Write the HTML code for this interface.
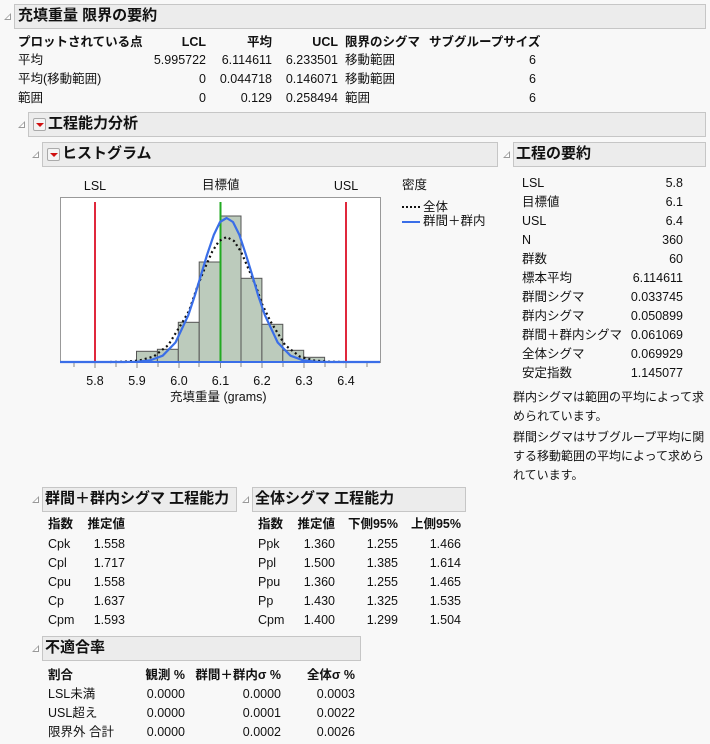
<!DOCTYPE html>
<html><head><meta charset="utf-8"><style>
body{margin:0;width:710px;height:744px;background:#f8f8f8;font-family:"Liberation Sans","Noto Sans CJK JP",sans-serif;font-size:12.5px;color:#111;position:relative;overflow:hidden}
.a{position:absolute;white-space:nowrap;line-height:14px}
.n{font-size:12px}
.r{text-align:right}
.b{font-weight:bold}
.hb{position:absolute;background:#ececec;border:1px solid #c6c6c6;box-sizing:border-box}
.ht{position:absolute;font-weight:bold;font-size:15px;line-height:18px;white-space:nowrap}
.tri{position:absolute;width:0;height:0;border-left:7px solid transparent;border-bottom:7px solid #999}
.tri:after{content:"";position:absolute;left:-5px;top:2px;border-left:4px solid transparent;border-bottom:4px solid #fff}
.btn{position:absolute;width:13px;height:13px;background:#f4f4f4;border:1px solid #aaa;border-radius:2px;box-sizing:border-box}
.btn:after{content:"";position:absolute;left:2px;top:4px;border-left:4px solid transparent;border-right:4px solid transparent;border-top:4px solid #d01010}
</style></head><body>

<div class="tri" style="left:4px;top:13px"></div>
<div class="hb" style="left:14px;top:4px;width:692px;height:25px"></div>
<div class="ht" style="left:18px;top:7px">充填重量 限界の要約</div>

<div class="a b" style="left:18px;top:35px">プロットされている点</div>
<div class="a b r" style="left:150px;top:35px;width:56px">LCL</div>
<div class="a b r" style="left:216px;top:35px;width:56px">平均</div>
<div class="a b r" style="left:282px;top:35px;width:56px">UCL</div>
<div class="a b" style="left:345px;top:35px">限界のシグマ</div>
<div class="a b" style="left:429px;top:35px">サブグループサイズ</div>

<div class="a" style="left:18px;top:53px">平均</div>
<div class="a r" style="left:130px;top:53px;width:76px">5.995722</div>
<div class="a r" style="left:196px;top:53px;width:76px">6.114611</div>
<div class="a r" style="left:262px;top:53px;width:76px">6.233501</div>
<div class="a" style="left:345px;top:53px">移動範囲</div>
<div class="a r" style="left:500px;top:53px;width:36px">6</div>

<div class="a" style="left:18px;top:72px">平均(移動範囲)</div>
<div class="a r" style="left:130px;top:72px;width:76px">0</div>
<div class="a r" style="left:196px;top:72px;width:76px">0.044718</div>
<div class="a r" style="left:262px;top:72px;width:76px">0.146071</div>
<div class="a" style="left:345px;top:72px">移動範囲</div>
<div class="a r" style="left:500px;top:72px;width:36px">6</div>

<div class="a" style="left:18px;top:91px">範囲</div>
<div class="a r" style="left:130px;top:91px;width:76px">0</div>
<div class="a r" style="left:196px;top:91px;width:76px">0.129</div>
<div class="a r" style="left:262px;top:91px;width:76px">0.258494</div>
<div class="a" style="left:345px;top:91px">範囲</div>
<div class="a r" style="left:500px;top:91px;width:36px">6</div>

<div class="tri" style="left:18px;top:121px"></div>
<div class="hb" style="left:28px;top:112px;width:678px;height:25px"></div>
<div class="btn" style="left:33px;top:118px"></div>
<div class="ht" style="left:48px;top:115px">工程能力分析</div>

<div class="tri" style="left:32px;top:151px"></div>
<div class="hb" style="left:42px;top:142px;width:456px;height:25px"></div>
<div class="btn" style="left:47px;top:148px"></div>
<div class="ht" style="left:62px;top:145px">ヒストグラム</div>

<div class="tri" style="left:503px;top:151px"></div>
<div class="hb" style="left:513px;top:142px;width:193px;height:25px"></div>
<div class="ht" style="left:516px;top:145px">工程の要約</div>

<svg style="position:absolute;left:0;top:0" width="710" height="744">
<rect x="60.5" y="197.5" width="320" height="165" fill="#fff" stroke="#999"/>
<g fill="#bccbbc" stroke="#555" stroke-width="1">
<rect x="136.5" y="351.3" width="20.9" height="10.7"/>
<rect x="157.4" y="349.3" width="20.9" height="12.7"/>
<rect x="178.3" y="322.3" width="20.9" height="39.7"/>
<rect x="199.2" y="262" width="20.9" height="100"/>
<rect x="220.1" y="216" width="20.9" height="146"/>
<rect x="241" y="278.3" width="20.9" height="83.7"/>
<rect x="261.9" y="324.3" width="20.9" height="37.7"/>
<rect x="282.8" y="350.3" width="20.9" height="11.7"/>
<rect x="303.7" y="357.3" width="20.9" height="4.7"/>
</g>
<line x1="95" y1="202" x2="95" y2="362" stroke="#e0283c" stroke-width="2"/>
<line x1="346" y1="202" x2="346" y2="362" stroke="#e0283c" stroke-width="2"/>
<line x1="220.5" y1="202" x2="220.5" y2="362" stroke="#22aa22" stroke-width="2"/>
<polyline fill="none" stroke="#111" stroke-width="2.2" stroke-dasharray="2,3" points="110,362 124.4,361.7 139,360.6 153.7,356.5 168.3,345.1 182.9,321.4 189,311 197.5,286.2 204,270 212.2,251.7 219,241 226.6,237 234,241 241,251.7 249,270 255.9,286.2 262,304 270.5,321.4 285.1,345.1 299.7,356.5 314.4,360.6 329,361.7 343.6,362"/>
<polyline fill="none" stroke="#3a6ee8" stroke-width="2.2" stroke-linejoin="round" points="60,362 124.4,362 137.2,361.7 150,360.4 162.7,355.7 175.5,342.5 188.3,315.2 195,295 201.1,274.7 207,255 213.8,234.9 220,222 226.6,218 233,222 239.4,234.9 246,255 252.1,274.7 258,295 264.9,315.2 277.7,342.5 290.5,355.7 303.2,360.4 316,361.7 328.8,362 380,362"/>
<line x1="60" y1="362" x2="380" y2="362" stroke="#3a6ee8" stroke-width="2"/>
<g stroke="#888">
<line x1="74" y1="363" x2="74" y2="367"/><line x1="95" y1="363" x2="95" y2="368"/><line x1="116" y1="363" x2="116" y2="367"/><line x1="137" y1="363" x2="137" y2="368"/><line x1="158" y1="363" x2="158" y2="367"/><line x1="179" y1="363" x2="179" y2="368"/><line x1="199" y1="363" x2="199" y2="367"/><line x1="220.5" y1="363" x2="220.5" y2="368"/><line x1="241" y1="363" x2="241" y2="367"/><line x1="262" y1="363" x2="262" y2="368"/><line x1="283" y1="363" x2="283" y2="367"/><line x1="304" y1="363" x2="304" y2="368"/><line x1="325" y1="363" x2="325" y2="367"/><line x1="346" y1="363" x2="346" y2="368"/><line x1="367" y1="363" x2="367" y2="367"/>
</g>
<g font-family="Liberation Sans,sans-serif" font-size="12.5" fill="#111" text-anchor="middle">
<text x="95" y="385">5.8</text><text x="137" y="385">5.9</text><text x="179" y="385">6.0</text><text x="220.5" y="385">6.1</text><text x="262" y="385">6.2</text><text x="304" y="385">6.3</text><text x="346" y="385">6.4</text>
<text x="95" y="190">LSL</text><text x="346" y="190">USL</text>
</g>
<line x1="402" y1="207" x2="420" y2="207" stroke="#111" stroke-width="2" stroke-dasharray="2,2"/>
<line x1="402" y1="222" x2="420" y2="222" stroke="#3a6ee8" stroke-width="2"/>
</svg>
<div class="a" style="left:202px;top:178px">目標値</div>
<div class="a" style="left:170px;top:390px">充填重量 (grams)</div>
<div class="a" style="left:402px;top:178px">密度</div>
<div class="a" style="left:423px;top:200px">全体</div>
<div class="a" style="left:423px;top:214px">群間＋群内</div>

<div class="a" style="left:522px;top:176px">LSL</div><div class="a r" style="left:600px;top:176px;width:83px">5.8</div>
<div class="a" style="left:522px;top:195px">目標値</div><div class="a r" style="left:600px;top:195px;width:83px">6.1</div>
<div class="a" style="left:522px;top:214px">USL</div><div class="a r" style="left:600px;top:214px;width:83px">6.4</div>
<div class="a" style="left:522px;top:233px">N</div><div class="a r" style="left:600px;top:233px;width:83px">360</div>
<div class="a" style="left:522px;top:252px">群数</div><div class="a r" style="left:600px;top:252px;width:83px">60</div>
<div class="a" style="left:522px;top:271px">標本平均</div><div class="a r" style="left:600px;top:271px;width:83px">6.114611</div>
<div class="a" style="left:522px;top:290px">群間シグマ</div><div class="a r" style="left:600px;top:290px;width:83px">0.033745</div>
<div class="a" style="left:522px;top:309px">群内シグマ</div><div class="a r" style="left:600px;top:309px;width:83px">0.050899</div>
<div class="a" style="left:522px;top:328px">群間＋群内シグマ</div><div class="a r" style="left:600px;top:328px;width:83px">0.061069</div>
<div class="a" style="left:522px;top:347px">全体シグマ</div><div class="a r" style="left:600px;top:347px;width:83px">0.069929</div>
<div class="a" style="left:522px;top:366px">安定指数</div><div class="a r" style="left:600px;top:366px;width:83px">1.145077</div>
<div class="a n" style="left:513px;top:390px">群内シグマは範囲の平均によって求</div>
<div class="a n" style="left:513px;top:409px">められています。</div>
<div class="a n" style="left:513px;top:430px">群間シグマはサブグループ平均に関</div>
<div class="a n" style="left:513px;top:449px">する移動範囲の平均によって求めら</div>
<div class="a n" style="left:513px;top:468px">れています。</div>

<div class="tri" style="left:32px;top:496px"></div>
<div class="hb" style="left:42px;top:487px;width:195px;height:25px"></div>
<div class="ht" style="left:45px;top:490px">群間＋群内シグマ 工程能力</div>
<div class="tri" style="left:242px;top:496px"></div>
<div class="hb" style="left:252px;top:487px;width:214px;height:25px"></div>
<div class="ht" style="left:255px;top:490px">全体シグマ 工程能力</div>

<div class="a b" style="left:48px;top:517px">指数</div><div class="a b r" style="left:80px;top:517px;width:45px">推定値</div>
<div class="a" style="left:48px;top:537px">Cpk</div><div class="a r" style="left:80px;top:537px;width:45px">1.558</div>
<div class="a" style="left:48px;top:556px">Cpl</div><div class="a r" style="left:80px;top:556px;width:45px">1.717</div>
<div class="a" style="left:48px;top:575px">Cpu</div><div class="a r" style="left:80px;top:575px;width:45px">1.558</div>
<div class="a" style="left:48px;top:594px">Cp</div><div class="a r" style="left:80px;top:594px;width:45px">1.637</div>
<div class="a" style="left:48px;top:613px">Cpm</div><div class="a r" style="left:80px;top:613px;width:45px">1.593</div>

<div class="a b" style="left:258px;top:517px">指数</div><div class="a b r" style="left:285px;top:517px;width:50px">推定値</div><div class="a b r" style="left:338px;top:517px;width:60px">下側95%</div><div class="a b r" style="left:401px;top:517px;width:60px">上側95%</div>
<div class="a" style="left:258px;top:537px">Ppk</div><div class="a r" style="left:285px;top:537px;width:50px">1.360</div><div class="a r" style="left:338px;top:537px;width:60px">1.255</div><div class="a r" style="left:401px;top:537px;width:60px">1.466</div>
<div class="a" style="left:258px;top:556px">Ppl</div><div class="a r" style="left:285px;top:556px;width:50px">1.500</div><div class="a r" style="left:338px;top:556px;width:60px">1.385</div><div class="a r" style="left:401px;top:556px;width:60px">1.614</div>
<div class="a" style="left:258px;top:575px">Ppu</div><div class="a r" style="left:285px;top:575px;width:50px">1.360</div><div class="a r" style="left:338px;top:575px;width:60px">1.255</div><div class="a r" style="left:401px;top:575px;width:60px">1.465</div>
<div class="a" style="left:258px;top:594px">Pp</div><div class="a r" style="left:285px;top:594px;width:50px">1.430</div><div class="a r" style="left:338px;top:594px;width:60px">1.325</div><div class="a r" style="left:401px;top:594px;width:60px">1.535</div>
<div class="a" style="left:258px;top:613px">Cpm</div><div class="a r" style="left:285px;top:613px;width:50px">1.400</div><div class="a r" style="left:338px;top:613px;width:60px">1.299</div><div class="a r" style="left:401px;top:613px;width:60px">1.504</div>

<div class="tri" style="left:32px;top:645px"></div>
<div class="hb" style="left:42px;top:636px;width:319px;height:25px"></div>
<div class="ht" style="left:45px;top:639px">不適合率</div>

<div class="a b" style="left:48px;top:668px">割合</div><div class="a b r" style="left:120px;top:668px;width:65px">観測 %</div><div class="a b r" style="left:190px;top:668px;width:91px">群間＋群内σ %</div><div class="a b r" style="left:290px;top:668px;width:65px">全体σ %</div>
<div class="a" style="left:48px;top:687px">LSL未満</div><div class="a r" style="left:120px;top:687px;width:65px">0.0000</div><div class="a r" style="left:190px;top:687px;width:91px">0.0000</div><div class="a r" style="left:290px;top:687px;width:65px">0.0003</div>
<div class="a" style="left:48px;top:706px">USL超え</div><div class="a r" style="left:120px;top:706px;width:65px">0.0000</div><div class="a r" style="left:190px;top:706px;width:91px">0.0001</div><div class="a r" style="left:290px;top:706px;width:65px">0.0022</div>
<div class="a" style="left:48px;top:725px">限界外 合計</div><div class="a r" style="left:120px;top:725px;width:65px">0.0000</div><div class="a r" style="left:190px;top:725px;width:91px">0.0002</div><div class="a r" style="left:290px;top:725px;width:65px">0.0026</div>
</body></html>
